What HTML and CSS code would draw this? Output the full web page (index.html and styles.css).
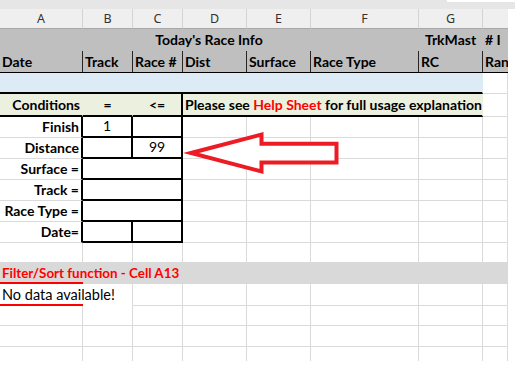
FILE: index.html
```html
<!DOCTYPE html>
<html>
<head>
<meta charset="utf-8">
<link rel="stylesheet" href="styles.css">
</head>
<body>
<div class="page">
  <div class="strip"></div>
  <div class="sheet">
    <div class="ch">A</div><div class="ch">B</div><div class="ch">C</div><div class="ch">D</div><div class="ch">E</div><div class="ch">F</div><div class="ch">G</div><div class="ch ch-last"></div>

    <div class="c g1 b center span-af">Today's Race Info</div>
    <div class="c g1 b center">TrkMast</div>
    <div class="c g1 b">#&nbsp;I</div>

    <div class="c g2 b">Date</div>
    <div class="c g2 b">Track</div>
    <div class="c g2 b">Race #</div>
    <div class="c g2 b">Dist</div>
    <div class="c g2 b">Surface</div>
    <div class="c g2 b">Race Type</div>
    <div class="c g2 b">RC</div>
    <div class="c g2 b g2-last">Ran</div>

    <div class="c blue span-ag"></div>
    <div class="c"></div>

    <div class="c cond b right">Conditions</div>
    <div class="c cond b center">=</div>
    <div class="c cond b center thick-r">&lt;=</div>
    <div class="c cond b span-dg">Please see&nbsp;<span class="red">Help Sheet</span>&nbsp;for full usage explanation</div>
    <div class="c"></div>

    <div class="c b right thick-r">Finish</div>
    <div class="c box center thick-r">1</div>
    <div class="c box thick-r"></div>
    <div class="c"></div><div class="c"></div><div class="c"></div><div class="c"></div><div class="c"></div>

    <div class="c b right thick-r">Distance</div>
    <div class="c box thick-r"></div>
    <div class="c box center thick-r">99</div>
    <div class="c"></div><div class="c"></div><div class="c"></div><div class="c"></div><div class="c"></div>

    <div class="c b right thick-r">Surface =</div>
    <div class="c box thick-r span-bc"></div>
    <div class="c"></div><div class="c"></div><div class="c"></div><div class="c"></div><div class="c"></div>

    <div class="c b right thick-r">Track =</div>
    <div class="c box thick-r span-bc"></div>
    <div class="c"></div><div class="c"></div><div class="c"></div><div class="c"></div><div class="c"></div>

    <div class="c b right thick-r">Race Type =</div>
    <div class="c box thick-r span-bc"></div>
    <div class="c"></div><div class="c"></div><div class="c"></div><div class="c"></div><div class="c"></div>

    <div class="c b right thick-r">Date=</div>
    <div class="c box thick-r"></div>
    <div class="c box thick-r"></div>
    <div class="c"></div><div class="c"></div><div class="c"></div><div class="c"></div><div class="c"></div>

    <div class="c"></div><div class="c"></div><div class="c"></div><div class="c"></div><div class="c"></div><div class="c"></div><div class="c"></div><div class="c"></div>

    <div class="c filter b red span-all">Filter/Sort function - Cell A13</div>

    <div class="c nodata span-ab">No data available!</div>
    <div class="c"></div><div class="c"></div><div class="c"></div><div class="c"></div><div class="c"></div><div class="c"></div>

    <div class="c"></div><div class="c"></div><div class="c"></div><div class="c"></div><div class="c"></div><div class="c"></div><div class="c"></div><div class="c"></div>
    <div class="c"></div><div class="c"></div><div class="c"></div><div class="c"></div><div class="c"></div><div class="c"></div><div class="c"></div><div class="c"></div>
    <div class="c open"></div><div class="c open"></div><div class="c open"></div><div class="c open"></div><div class="c open"></div><div class="c open"></div><div class="c open"></div><div class="c open"></div>
  </div>
  <svg class="arrow" width="515" height="369" viewBox="0 0 515 369">
    <polygon points="191,153 261.5,134.5 261.5,143.7 336.5,143.7 336.5,162.5 261.5,162.5 261.5,171.5" fill="#ffffff" stroke="#ed1c24" stroke-width="4"/>
  </svg>
</div>
</body>
</html>
```

FILE: styles.css
```css
html, body {
  margin: 0;
  padding: 0;
  background: #ffffff;
}

.page {
  position: relative;
  width: 515px;
  height: 369px;
  overflow: hidden;
}

.strip {
  height: 9px;
  background: linear-gradient(#ffffff, #ffffff) right top / 68px 2px no-repeat, #e6e6e6;
}

.sheet {
  display: grid;
  width: 508px;
  grid-template-columns: 83px 50px 50px 64px 64px 108px 64px 25px;
  grid-template-rows: 20px 22px 22px 21px 23px repeat(6, 21px) 20px 21px 22px 20px 21px 14px;
  font-family: Lato, "Liberation Sans", sans-serif;
  font-size: 14px;
  color: #000000;
}

.ch {
  box-sizing: border-box;
  background: #efefef;
  border-right: 1px solid #d4d4d4;
  border-bottom: 1px solid #a8a8a8;
  display: flex;
  align-items: center;
  justify-content: center;
  font-family: "Noto Sans", sans-serif;
  font-size: 12.5px;
  color: #333333;
}

.ch-last {
  border-right: none;
}

.c {
  box-sizing: border-box;
  border-right: 1px solid #dadada;
  border-bottom: 1px solid #dadada;
  display: flex;
  align-items: flex-end;
  padding: 0 2px 1px;
  line-height: 18px;
  white-space: nowrap;
  overflow: hidden;
  min-width: 0;
}

.b { font-weight: 700; }
.center { justify-content: center; }
.right { justify-content: flex-end; }
.red { color: #ff0000; }

.span-af { grid-column: 1 / 7; }
.span-ag { grid-column: 1 / 8; }
.span-dg { grid-column: 4 / 8; }
.span-bc { grid-column: 2 / 4; }
.span-ab { grid-column: 1 / 3; }
.span-all { grid-column: 1 / 9; }

.g1 {
  background: #bfbfbf;
  border-color: #bfbfbf;
}

.g2 {
  background: #bfbfbf;
  border-right: 1px solid #262626;
  border-bottom: 1px solid #000000;
}

.g2-last {
  border-right: none;
}

.blue {
  background: #ddebf7;
  border-right-color: #ddebf7;
  border-bottom: 2px solid #000000;
}

.cond {
  background: #ebf1de;
  border-right-color: #ebf1de;
  border-bottom: 2px solid #000000;
}

.thick-r {
  border-right: 2px solid #000000;
}

.box {
  border-bottom: 2px solid #000000;
}

.filter {
  background: linear-gradient(#ff0000, #ff0000) left bottom / 83px 2px no-repeat, #d9d9d9;
  border: none;
  font-size: 13.4px;
  padding-bottom: 2px;
}

.nodata {
  background: linear-gradient(#ff0000, #ff0000) left bottom / 83px 2px no-repeat;
  background-origin: border-box;
  border-bottom: none;
  padding-bottom: 2px;
  font-size: 14.5px;
}

.open {
  border-bottom: none;
}

.arrow {
  position: absolute;
  left: 0;
  top: 0;
  pointer-events: none;
}
```
